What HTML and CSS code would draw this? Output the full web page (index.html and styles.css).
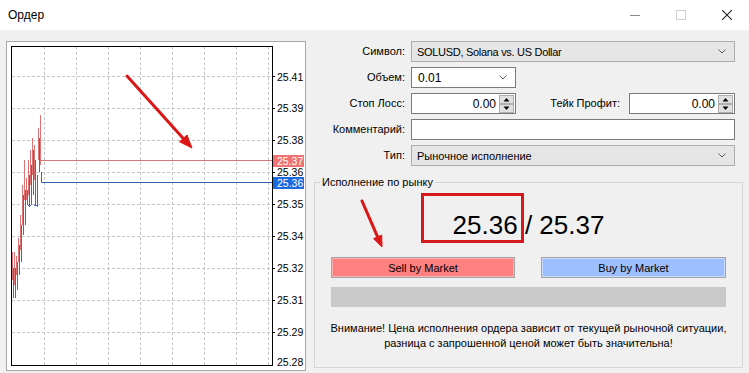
FILE: index.html
```html
<!DOCTYPE html>
<html lang="ru">
<head>
  <meta charset="UTF-8">
  <title>Ордер</title>
  <link rel="stylesheet" href="styles.css">
</head>
<body>
  <div class="titlebar">
    <span class="title">Ордер</span>
    <div class="controls">
      <span class="ctl">
        <svg width="10" height="10" viewBox="0 0 10 10"><path d="M0 5.5H10" class="ico-min"/></svg>
      </span>
      <span class="ctl">
        <svg width="10" height="10" viewBox="0 0 10 10"><rect x="0.5" y="0.5" width="9" height="9" class="ico-max"/></svg>
      </span>
      <span class="ctl">
        <svg width="10" height="10" viewBox="0 0 10 10"><path d="M0 0L10 10M10 0L0 10" class="ico-close"/></svg>
      </span>
    </div>
  </div>

  <div class="content">
    <div class="chart">
      <svg class="chart-svg" width="298" height="328" viewBox="7 42 298 328">
        <!-- grid -->
        <path class="grid" d="M12 76.5H272 M12 108.5H272 M12 140.5H272 M12 172.5H272 M12 204.5H272 M12 236.5H272 M12 268.5H272 M12 300.5H272 M12 332.5H272
          M44.5 47V365 M76.5 47V365 M108.5 47V365 M140.5 47V365 M172.5 47V365 M204.5 47V365 M236.5 47V365 M268.5 47V365"/>
        <!-- bars -->
        <path class="bars-ask" d="M12.5 252V280 M14.5 252V285 M16.5 256V275 M18.5 238V262 M20.5 215V250 M22.5 185V225 M24.5 160V200 M26.5 178V200 M28.5 160V195 M30.5 150V185 M32.5 138V175 M34.5 145V180 M38.5 128V160 M40.5 115V165"/>
        <path class="bars-bid" d="M13.5 268V298 M15.5 268V298 M17.5 262V290 M19.5 245V275 M21.5 225V262 M23.5 195V235 M25.5 190V225 M27.5 190V205 M29.5 175V207 M31.5 165V205 M33.5 150V195 M35.5 160V205 M37.5 175V207 M39.5 138V172 M28 205.5H31 M34 205.5H37"/>
        <!-- price lines -->
        <path class="ask-line" d="M41 160.5H272"/>
        <path class="bid-line" d="M41.5 172V182.5H272"/>
        <!-- frame -->
        <rect class="frame" x="11.5" y="46.5" width="261" height="319"/>
        <!-- axis ticks -->
        <path class="ticks" d="M272 76.5H275 M272 108.5H275 M272 140.5H275 M272 172.5H275 M272 204.5H275 M272 236.5H275 M272 268.5H275 M272 300.5H275 M272 332.5H275"/>
        <text class="axis" x="277" y="81">25.41</text>
        <text class="axis" x="277" y="112">25.39</text>
        <text class="axis" x="277" y="144">25.38</text>
        <text class="axis" x="277" y="176">25.36</text>
        <text class="axis" x="277" y="208">25.35</text>
        <text class="axis" x="277" y="240">25.34</text>
        <text class="axis" x="277" y="272">25.32</text>
        <text class="axis" x="277" y="304">25.31</text>
        <text class="axis" x="277" y="336">25.29</text>
        <text class="axis" x="277" y="366">25.28</text>
        <rect class="ask-tag" x="273" y="155" width="31" height="12"/>
        <text class="axis tag-text" x="277" y="165">25.37</text>
        <rect class="bid-tag" x="273" y="177" width="31" height="12"/>
        <text class="axis tag-text" x="277" y="187">25.36</text>
        <!-- annotation arrow -->
        <path class="arrow-line" d="M127 76L183.3 138.4"/>
        <path class="arrow-head" d="M192 148L187 135L179.6 141.8Z"/>
      </svg>
    </div>

    <div class="order">
      <div class="fields">
        <label class="lbl">Символ:</label>
        <div class="combo list">
          <span class="latin">SOLUSD, Solana vs. US Dollar</span>
          <svg class="chev" width="8" height="5" viewBox="0 0 8 5"><path d="M0.5 0.5L4 4L7.5 0.5"/></svg>
        </div>

        <label class="lbl">Объем:</label>
        <div class="line">
          <div class="combo edit volume">
            <span>0.01</span>
            <svg class="chev" width="8" height="5" viewBox="0 0 8 5"><path d="M0.5 0.5L4 4L7.5 0.5"/></svg>
          </div>
        </div>

        <label class="lbl">Стоп Лосс:</label>
        <div class="line">
          <div class="spin stop">
            <span class="num">0.00</span>
            <svg class="spinner" width="15" height="18" viewBox="0 0 15 18">
              <rect x="0.5" y="0.5" width="14" height="8" class="spin-btn"/>
              <rect x="0.5" y="9.5" width="14" height="8" class="spin-btn"/>
              <path d="M4.5 6.5L7.5 3L10.5 6.5Z M4.5 11.5L7.5 15L10.5 11.5Z" class="spin-arrow"/>
            </svg>
          </div>
          <label class="lbl take">Тейк Профит:</label>
          <div class="spin profit">
            <span class="num">0.00</span>
            <svg class="spinner" width="15" height="18" viewBox="0 0 15 18">
              <rect x="0.5" y="0.5" width="14" height="8" class="spin-btn"/>
              <rect x="0.5" y="9.5" width="14" height="8" class="spin-btn"/>
              <path d="M4.5 6.5L7.5 3L10.5 6.5Z M4.5 11.5L7.5 15L10.5 11.5Z" class="spin-arrow"/>
            </svg>
          </div>
        </div>

        <label class="lbl">Комментарий:</label>
        <div class="textbox"></div>

        <label class="lbl">Тип:</label>
        <div class="combo list">
          <span>Рыночное исполнение</span>
          <svg class="chev" width="8" height="5" viewBox="0 0 8 5"><path d="M0.5 0.5L4 4L7.5 0.5"/></svg>
        </div>
      </div>

      <fieldset class="market">
        <legend>Исполнение по рынку</legend>
        <div class="market-body">
          <div class="price">
            25.36 / 25.37
            <span class="mark"></span>
            <svg class="pointer" width="40" height="52" viewBox="0 0 40 52">
              <path class="arrow-line" d="M11 3L26.6 38.9"/>
              <path class="arrow-head" d="M31 49L30.7 37.1L22.5 40.7Z"/>
            </svg>
          </div>
          <div class="buttons">
            <button class="btn sell">Sell by Market</button>
            <button class="btn buy">Buy by Market</button>
          </div>
          <div class="progress"></div>
          <p class="note">Внимание! Цена исполнения ордера зависит от текущей рыночной ситуации,<br>разница с запрошенной ценой может быть значительна!</p>
        </div>
      </fieldset>
    </div>
  </div>
</body>
</html>
```

FILE: styles.css
```css
body {
  margin: 0;
  width: 749px;
  height: 373px;
  overflow: hidden;
  background-color: #f0f0f0;
  font-family: "Liberation Sans", Arial, sans-serif;
  font-size: 11px;
  color: #000;
}
.titlebar {
  height: 30px;
  background-color: #fff;
  display: flex;
  align-items: center;
  justify-content: space-between;
}
.title {
  font-size: 12px;
  margin-left: 8px;
}
.controls {
  display: flex;
  height: 30px;
  margin-right: -1px;
}
.ctl {
  width: 46px;
  height: 30px;
  display: flex;
  align-items: center;
  justify-content: center;
}
.ico-min {
  stroke: #8a8a8a;
  stroke-width: 1;
}
.ico-max {
  stroke: #cfcfcf;
  fill: none;
}
.ico-close {
  stroke: #222;
  stroke-width: 1.1;
}
.content {
  display: flex;
  padding: 11px 0 0 6px;
}
.chart {
  width: 298px;
  height: 328px;
  border: 1px solid #a7a7a7;
  background-color: #fff;
}
.chart-svg {
  display: block;
}
.grid {
  stroke: #c6c6c6;
  stroke-dasharray: 3 2;
  fill: none;
}
.bars-ask {
  stroke: #e07474;
  fill: none;
}
.bars-bid {
  stroke: #4866c8;
  fill: none;
}
.ask-line {
  stroke: #d07a7a;
  fill: none;
}
.bid-line {
  stroke: #2e62aa;
  fill: none;
}
.frame {
  fill: none;
  stroke: #000;
}
.ticks {
  stroke: #000;
}
.axis {
  font-family: "Liberation Sans", Arial, sans-serif;
  font-size: 10.5px;
  fill: #000;
}
.ask-tag {
  fill: #f07272;
}
.bid-tag {
  fill: #1b6bdf;
}
.tag-text {
  fill: #fff;
}
.arrow-line {
  stroke: #dc1616;
  stroke-width: 3;
  stroke-linecap: round;
  fill: none;
}
.arrow-head {
  fill: #dc1616;
  stroke: #dc1616;
  stroke-width: 1;
  stroke-linejoin: round;
}

.order {
  width: 443px;
}
.fields {
  display: grid;
  grid-template-columns: 99px 324px;
  grid-auto-rows: 21px;
  column-gap: 6px;
  row-gap: 5px;
}
.lbl {
  text-align: right;
  line-height: 21px;
  white-space: nowrap;
}
.line {
  display: flex;
  align-items: stretch;
}
.combo {
  box-sizing: border-box;
  display: flex;
  align-items: center;
  justify-content: space-between;
  padding: 0 8px 0 5px;
}
.combo.list {
  background-color: #e5e5e5;
  border: 1px solid #acacac;
}
.combo.edit {
  background-color: #fff;
  border: 1px solid #7a7a7a;
}
.latin {
  letter-spacing: -0.3px;
}
.volume {
  width: 105px;
  font-size: 12px;
  padding-left: 6px;
}
.chev path {
  stroke: #5a5a5a;
  fill: none;
}
.spin {
  box-sizing: border-box;
  border: 1px solid #7a7a7a;
  background-color: #fff;
  display: flex;
  align-items: center;
  justify-content: flex-end;
  padding-right: 1px;
}
.stop {
  width: 105px;
}
.profit {
  width: 106px;
}
.num {
  font-size: 12px;
  margin-right: 3px;
}
.spinner {
  display: block;
}
.spin-btn {
  fill: #e1e1e1;
  stroke: #adadad;
}
.spin-arrow {
  fill: #000;
}
.take {
  box-sizing: border-box;
  width: 113px;
  padding-right: 9px;
}
.textbox {
  box-sizing: border-box;
  border: 1px solid #7a7a7a;
  background-color: #fff;
}

.market {
  margin: 9px 6px 0 8px;
  padding: 0;
  border: 1px solid #d6d6d6;
  min-width: 0;
}
.market legend {
  padding: 0 2px;
  margin-left: 5px;
  line-height: 14px;
}
.market-body {
  padding: 0 16px 16px;
}
.price {
  position: relative;
  height: 50px;
  margin-top: 11px;
  line-height: 50px;
  text-align: center;
  font-size: 26px;
}
.mark {
  position: absolute;
  left: 90px;
  top: -7px;
  width: 103px;
  height: 50px;
  box-sizing: border-box;
  border: 3px solid #d41a1f;
}
.pointer {
  position: absolute;
  left: 20px;
  top: -2px;
}
.buttons {
  display: flex;
  justify-content: space-between;
  margin-top: 7px;
}
.btn {
  box-sizing: border-box;
  width: 184px;
  height: 21px;
  padding: 0;
  font-family: "Liberation Sans", Arial, sans-serif;
  font-size: 11px;
  color: #000;
  border: 1px solid #a3a3a3;
}
.sell {
  background-color: #ff8080;
  box-shadow: inset 0 0 0 1px #ffb0b0;
}
.buy {
  width: 185px;
  background-color: #9ebfff;
  box-shadow: inset 0 0 0 1px #c8dafd;
}
.progress {
  height: 20px;
  margin-top: 9px;
  background-color: #c9c9c9;
}
.note {
  margin: 14px -4px 0;
  text-align: center;
  line-height: 15px;
  white-space: nowrap;
}
```
